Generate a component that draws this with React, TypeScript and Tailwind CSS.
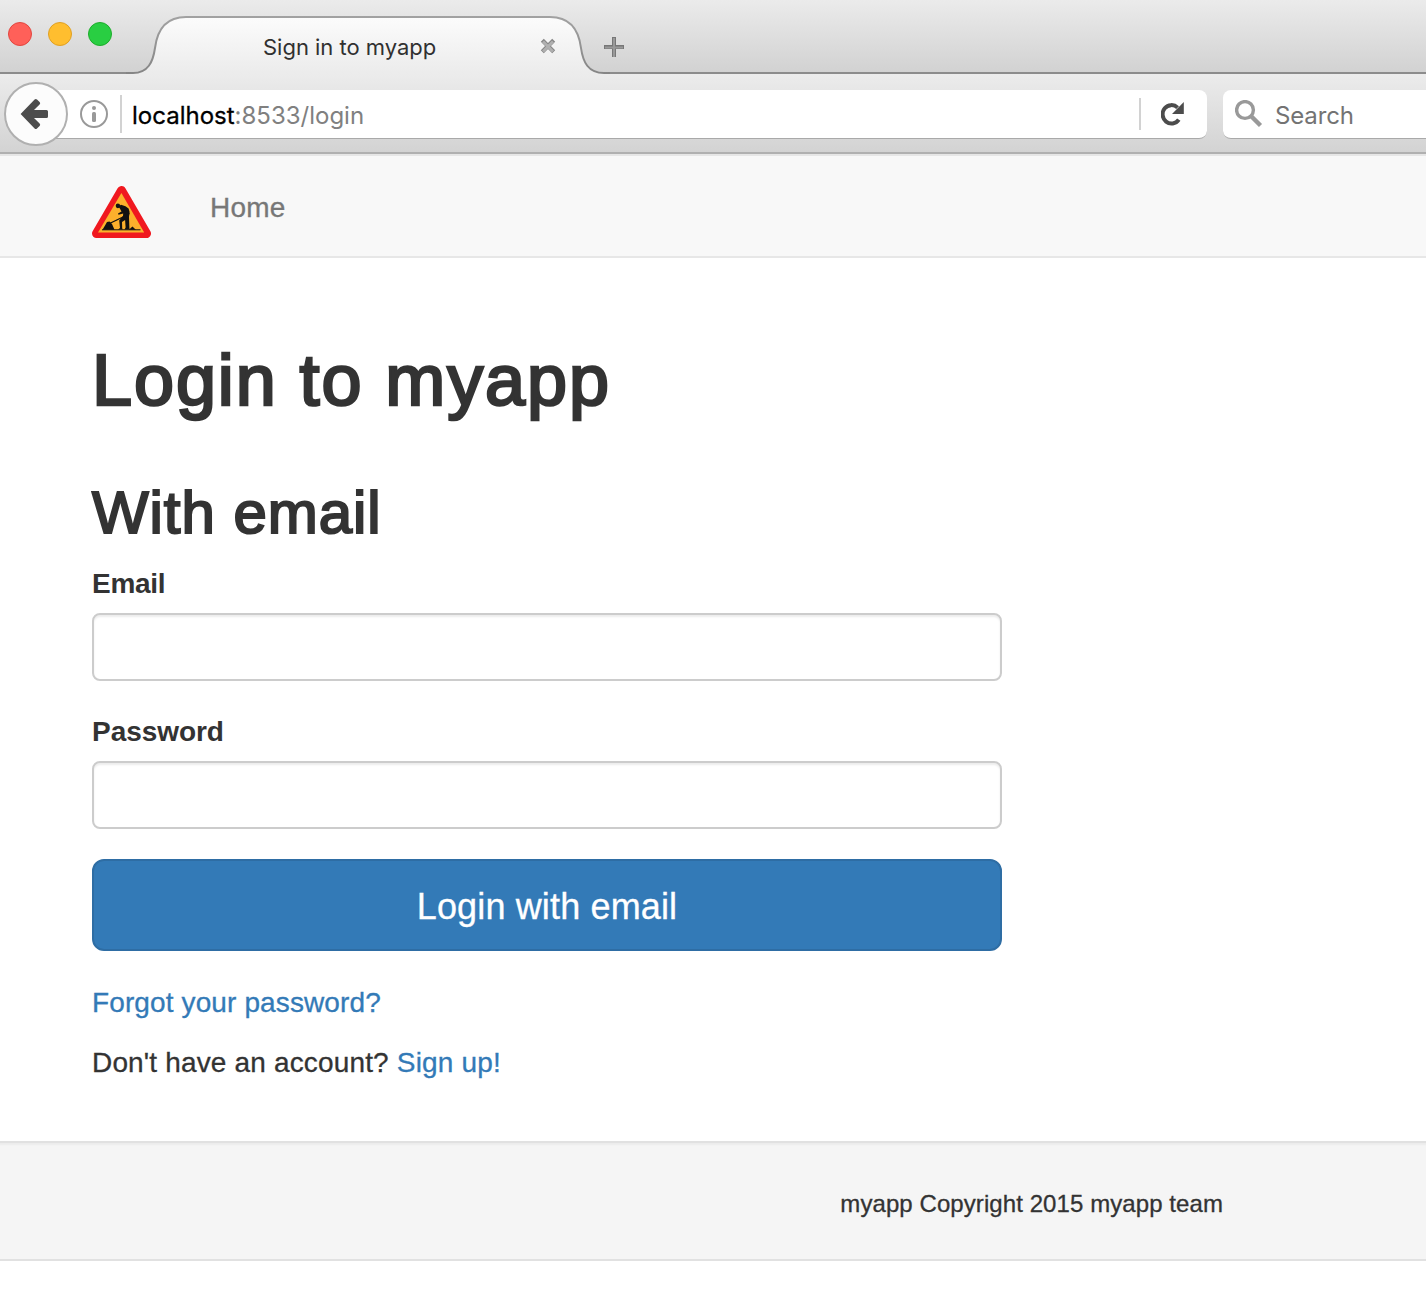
import React from "react";

function TabShape() {
  return (
    <svg className="absolute inset-0" width="484" height="76" viewBox="126 0 484 76" fill="none">
      <defs>
        <linearGradient id="tabFill" x1="0" y1="16" x2="0" y2="76" gradientUnits="userSpaceOnUse">
          <stop stopColor="#fcfcfc" />
          <stop offset="1" stopColor="#ebebeb" />
        </linearGradient>
        <linearGradient id="tabEdge" x1="0" y1="16" x2="0" y2="74" gradientUnits="userSpaceOnUse">
          <stop stopColor="#a2a2a2" />
          <stop offset="1" stopColor="#858585" />
        </linearGradient>
      </defs>
      <path d="M126 76V73H133C148 73 153 62 155 48C157 32 164 17 186 17H550C572 17 579 32 581 48C583 62 588 73 604 73H610V76Z" fill="url(#tabFill)" />
      <path d="M126 73H133C148 73 153 62 155 48C157 32 164 17 186 17H550C572 17 579 32 581 48C583 62 588 73 604 73H610" stroke="url(#tabEdge)" strokeWidth="2" />
    </svg>
  );
}

function TabStrip() {
  return (
    <div className="flex h-[74px] border-b-2 border-[#8c8c8c] bg-linear-to-b from-[#ebebeb] to-[#d2d2d2]">
      <div className="flex w-[126px] shrink-0 gap-4 pl-2 pt-[22px]">
        <span className="size-6 rounded-full border border-[#e2463f] bg-[#ff6059]" />
        <span className="size-6 rounded-full border border-[#e0a023] bg-[#ffbe2f]" />
        <span className="size-6 rounded-full border border-[#1dad2b] bg-[#29ce42]" />
      </div>
      <div className="relative h-[76px] w-[484px] shrink-0">
        <TabShape />
        <div className="relative flex h-full pl-[137px] pt-[32px]">
          <span className="w-[277px] whitespace-nowrap font-['Inter',sans-serif] text-[22px] leading-[30px] tracking-[-0.02px] text-[#303030]">
            Sign in to myapp
          </span>
          <svg className="mt-[6px]" width="16" height="16" viewBox="0 0 16 16">
            <path d="M2.3 2.3L13.7 13.7M13.7 2.3L2.3 13.7" stroke="#858585" strokeWidth="4.2" />
            <path d="M3 3.4L13 13.4M13 3.4L3 13.4" stroke="#b0b0b0" strokeWidth="2.8" />
          </svg>
        </div>
      </div>
      <svg className="-ml-[6px] mt-[37px]" width="20" height="21" viewBox="0 0 20 21">
        <path d="M10 0V20M0 10H20" stroke="#777" strokeWidth="4" />
        <path d="M10 1V20M1 10.5H19" stroke="#999" strokeWidth="2" />
      </svg>
    </div>
  );
}

function Toolbar() {
  return (
    <div className="flex h-[82px] border-b-2 border-[#e6e6e6]">
      <div className="relative flex w-full border-b-2 border-[#b0b0b0] bg-linear-to-b from-[#ececec] to-[#d3d3d3] font-['Inter',sans-serif] text-[24px]">
        <div className="ml-9 mt-4 flex h-[49px] w-[1171px] shrink-0 items-center rounded-r-lg border-b border-[#a9a9a9] bg-white pl-11">
          <svg width="28" height="28" viewBox="0 0 28 28" fill="none">
            <circle cx="14" cy="14" r="13" stroke="#999" strokeWidth="2" />
            <circle cx="14" cy="8" r="2" fill="#999" />
            <rect x="12" y="12" width="4" height="10" rx="1.5" fill="#999" />
          </svg>
          <div className="ml-3 h-[38px] w-0.5 bg-[#d2d2d2]" />
          <div className="ml-[10px] mt-[4px] w-[1007px] whitespace-nowrap leading-[30px] text-[#808080]">
            <span className="text-black [-webkit-text-stroke:0.3px_#000]">localhost</span>:8533/login
          </div>
          <div className="h-8 w-0.5 bg-[#d2d2d2]" />
          <svg className="ml-5" width="24" height="26" viewBox="0 0 24 26" fill="none">
            <path d="M17.8 18.6A8.9 9.2 0 1 1 16.6 6.6" stroke="#4c4c4c" strokeWidth="4" />
            <path d="M22.8 1V13H11Z" fill="#4c4c4c" />
          </svg>
        </div>
        <div className="ml-4 mt-4 flex h-[49px] flex-1 items-center rounded-l-lg border-b border-[#a9a9a9] bg-white pl-3">
          <svg width="28" height="28" viewBox="0 0 28 28" fill="none">
            <circle cx="10" cy="10" r="8.4" stroke="#999" strokeWidth="3.4" />
            <path d="M16 16L25.5 25.5" stroke="#999" strokeWidth="4.4" />
          </svg>
          <span className="ml-[12px] mt-[4px] tracking-[-0.15px] text-[#737373]">Search</span>
        </div>
        <div className="absolute left-1 top-2 flex size-16 items-center justify-center rounded-full border-2 border-[#b0b0b0] bg-[#fcfcfc]">
          <svg className="-ml-1" width="28" height="32" viewBox="0 0 28 32">
            <path
              d="M0.6 16L14.6 1.5Q15.8 0.3 17 1.5L19.6 4Q20.8 5.2 19.6 6.4L14 12H26.5Q28 12 28 13.5V18.5Q28 20 26.5 20H14L19.6 25.6Q20.8 26.8 19.6 28L17 30.5Q15.8 31.7 14.6 30.5Z"
              fill="#4c4c4c"
            />
          </svg>
        </div>
      </div>
    </div>
  );
}

function RoadworksLogo() {
  return (
    <svg width="60" height="53" viewBox="0 0 60 53">
      <path d="M29.5 4.5L54.5 47.5H4.5Z" fill="#f0181f" stroke="#f0181f" strokeWidth="9" strokeLinejoin="round" />
      <path d="M29.4 7L52.2 46.5H6Z" fill="#fcb02c" />
      <path d="M10.5 43.8L13 39.5L15 36L17.5 35.6L20 38L22.5 43.8Z" fill="#111" />
      <path d="M37 43.8L39 41.8L40.5 40.4L42.5 42.4L44 43.8Z" fill="#111" />
      <path d="M10 43.8H48.5" stroke="#111" strokeWidth="1" />
      <path d="M18 37.2L30 31.5L37.5 27.5" stroke="#111" strokeWidth="1.2" />
      <ellipse cx="25.9" cy="19.8" rx="2.2" ry="2.4" fill="#111" />
      <path
        d="M26.5 20.4L29 18.8L33.5 20.3L36.6 22.5L37.6 26L37 31L37.4 42.3L38 43.6H32.5L33.6 41.5L33.1 34L30 36L30.2 42L30.6 43.6H26L28 42L27.2 34.5L31 30L31.2 27.6L26.5 28.8L26 27.5L29.5 25.5L28 22.8Z"
        fill="#111"
      />
    </svg>
  );
}

function Field({ label, type, labelClass }: { label: string; type: string; labelClass: string }) {
  return (
    <label className="block">
      <span className={`block text-[28px] font-bold leading-10 ${labelClass}`}>{label}</span>
      <input
        type={type}
        className="mt-[9px] block h-[68px] w-full rounded-lg border-2 border-[#ccc] bg-white px-6 shadow-[inset_0_2px_2px_rgba(0,0,0,0.075)] outline-none"
      />
    </label>
  );
}

export default function App() {
  return (
    <div className="min-h-[1312px] w-[1426px] overflow-hidden bg-white font-['Liberation_Sans',Arial,sans-serif] text-[28px] text-[#333]">
      <TabStrip />
      <Toolbar />
      <nav className="flex h-[102px] border-b-2 border-[#e7e7e7] bg-[#f8f8f8] pl-[92px]">
        <div className="mt-[30px]">
          <RoadworksLogo />
        </div>
        <a className="ml-[58px] mt-[32px] leading-10 tracking-[0.2px] text-[#777] [-webkit-text-stroke:0.3px_#777]">Home</a>
      </nav>
      <main className="h-[883px] w-[1002px] pl-[92px] pt-[82px]">
        <h1 className="whitespace-nowrap text-[72px] leading-[80px] tracking-[1.9px] [-webkit-text-stroke:2.6px_#333]">
          Login to myapp
        </h1>
        <h2 className="mt-[60px] whitespace-nowrap text-[60px] leading-[66px] tracking-[0.95px] [-webkit-text-stroke:2.1px_#333]">
          With email
        </h2>
        <form className="mt-[18px]" onSubmit={(e) => e.preventDefault()}>
          <Field label="Email" type="email" labelClass="tracking-[-0.3px]" />
          <div className="mt-[31px]">
            <Field label="Password" type="password" labelClass="tracking-[-0.05px]" />
          </div>
          <button className="mt-[30px] block h-[92px] w-full rounded-xl border-2 border-[#2e6da4] bg-[#337ab7] pt-[4px] text-[36px] tracking-[0.15px] text-white [-webkit-text-stroke:0.3px_#fff]">
            Login with email
          </button>
        </form>
        <p className="mt-8 leading-10 tracking-[0.12px]">
          <a className="text-[#337ab7] [-webkit-text-stroke:0.3px_#337ab7]">Forgot your password?</a>
        </p>
        <p className="mt-5 leading-10 tracking-[0.16px] [-webkit-text-stroke:0.3px_#333]">
          Don't have an account? <a className="text-[#337ab7] [-webkit-text-stroke:0.3px_#337ab7]">Sign up!</a>
        </p>
      </main>
      <footer className="flex h-[120px] justify-end border-y-2 border-[#e1e1e1] bg-[#f5f5f5] pr-[203px] pt-[43px] text-[24px] leading-9 shadow-[inset_0_4px_2px_-2px_rgba(0,0,0,0.04)]">
        <span className="tracking-[0.08px] [-webkit-text-stroke:0.3px_#333]">myapp Copyright 2015 myapp team</span>
      </footer>
    </div>
  );
}
